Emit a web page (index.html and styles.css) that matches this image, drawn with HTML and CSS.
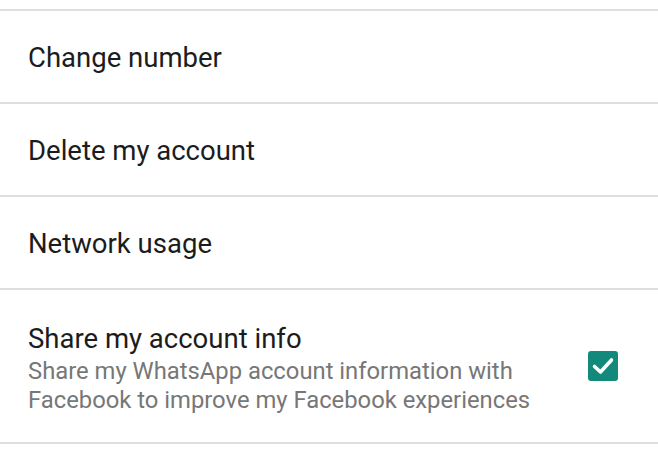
FILE: index.html
```html
<!DOCTYPE html>
<html lang="en">
<head>
    <meta charset="UTF-8">
    <meta name="viewport" content="width=device-width, initial-scale=1.0">
    <title>Account</title>
    <link rel="stylesheet" href="styles.css">
</head>
<body>

<ul class="settings">
    <li class="item">
        <span class="title">Change number</span>
    </li>
    <li class="item">
        <span class="title">Delete my account</span>
    </li>
    <li class="item">
        <span class="title">Network usage</span>
    </li>
    <li class="item tall">
        <div class="text">
            <span class="title">Share my account info</span>
            <span class="summary">Share my WhatsApp account information with<br>Facebook to improve my Facebook experiences</span>
        </div>
        <span class="checkbox checked">
            <svg viewBox="0 0 30 30" width="30" height="30">
                <path d="M6.5 15.5l6 5.5 11-12" fill="none" stroke="#fff" stroke-width="3.6" stroke-linecap="round" stroke-linejoin="round"/>
            </svg>
        </span>
    </li>
</ul>

</body>
</html>
```

FILE: styles.css
```css
body {
    margin: 0;
    background: #fff;
    font-family: Roboto, "Liberation Sans", sans-serif;
}
.settings {
    list-style: none;
    margin: 0;
    padding: 9px 0 0 0;
}
.item {
    display: flex;
    align-items: center;
    height: 93px;
    box-sizing: border-box;
    padding: 3px 40px 0 28px;
    border-top: 2px solid #dedede;
}
.item.tall {
    height: 156px;
    padding-top: 6px;
    border-bottom: 2px solid #dedede;
}
.text {
    flex: 1;
    display: flex;
    flex-direction: column;
    white-space: nowrap;
}
.title {
    font-size: 27.5px;
    color: #1c1c1c;
    line-height: 32px;
}
.summary {
    font-size: 23.8px;
    line-height: 29px;
    margin-top: 2px;
    color: #777;
}
.checkbox {
    width: 30px;
    height: 30px;
    flex-shrink: 0;
    border-radius: 3px;
    display: flex;
    align-items: center;
    justify-content: center;
    margin: 0 0 6px 10px;
}
.checkbox.checked {
    background: #12897a;
}
```
